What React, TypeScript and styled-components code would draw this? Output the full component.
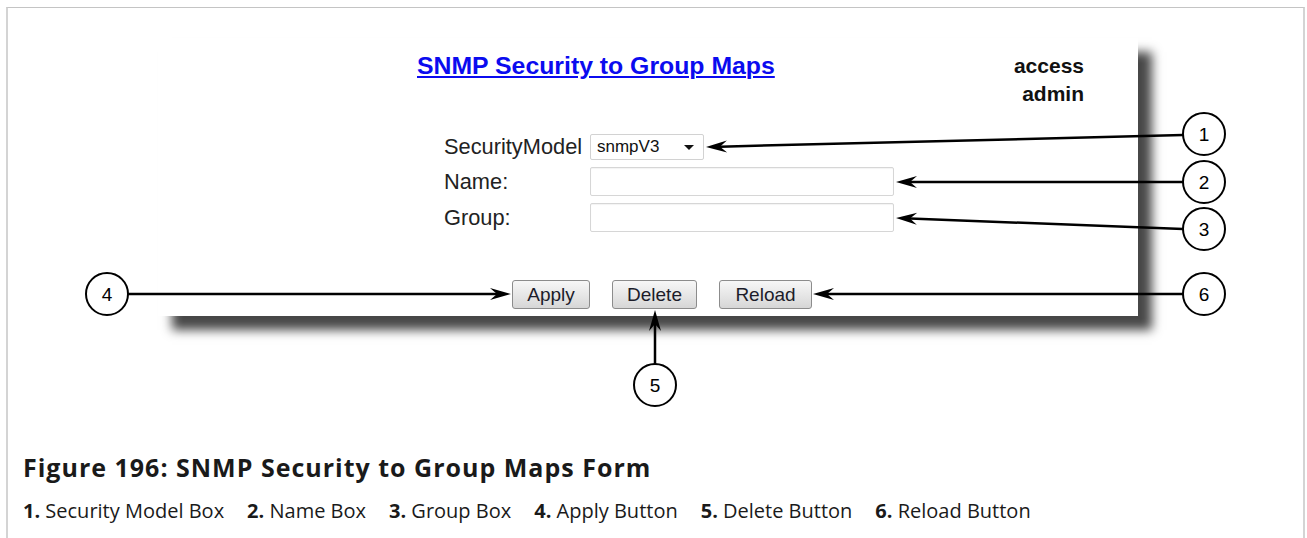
import React from 'react'
import styled, { createGlobalStyle } from 'styled-components'

const GlobalStyle = createGlobalStyle`
  html, body {
    margin: 0;
    padding: 0;
    background: #ffffff;
    overflow: hidden;
  }
  * { box-sizing: border-box; }
`

const Page = styled.div`
  position: relative;
  width: 1307px;
  height: 538px;
  padding-top: 7px;
`

const Frame = styled.div`
  margin: 0 2px 0 6px;
  height: 531px;
  border-top: 1px solid #c4c4c4;
  border-left: 2px solid #d4d4d4;
  border-right: 2px solid #d4d4d4;
`

const Figure = styled.div`
  height: 432px;
  padding: 30px 0 0 150px;
`

const Panel = styled.div`
  width: 980px;
  height: 278px;
  background: #ffffff;
  box-shadow: 14px 14px 10px rgba(0, 0, 0, 0.72);
  font-family: "Liberation Sans", Arial, sans-serif;
`

const Header = styled.div`
  display: flex;
  justify-content: space-between;
  align-items: flex-start;
  padding: 14px 54px 0 259px;
`

const Title = styled.a`
  font-size: 24.8px;
  line-height: 28px;
  font-weight: bold;
  color: #0b0bef;
  text-decoration: underline;
  text-decoration-thickness: 2px;
  text-underline-offset: 2px;
`

const UserBox = styled.div`
  text-align: right;
  font-size: 21px;
  line-height: 28px;
  font-weight: bold;
  color: #111111;
`

const Form = styled.div`
  display: grid;
  grid-template-columns: 146px auto;
  row-gap: 7px;
  align-items: center;
  margin: 26px 0 0 286px;
`

const Label = styled.div`
  font-size: 21.8px;
  color: #222222;
`

const SelectBox = styled.div`
  position: relative;
  width: 114px;
  height: 26px;
  border: 1px solid #d2d2d2;
  border-radius: 2px;
  padding-left: 6px;
  font-size: 17px;
  line-height: 24px;
  color: #111111;

  &::after {
    content: '';
    position: absolute;
    right: 9px;
    top: 10px;
    border-left: 5px solid transparent;
    border-right: 5px solid transparent;
    border-top: 5px solid #111111;
  }
`

const TextBox = styled.div`
  width: 304px;
  height: 29px;
  border: 1px solid #d6d6d6;
  border-radius: 2px;
  box-shadow: inset 0 1px 1px rgba(0, 0, 0, 0.05);
`

const Buttons = styled.div`
  display: flex;
  gap: 22px;
  margin: 48px 0 0 354px;
`

const Button = styled.button<{ $w: number }>`
  width: ${p => p.$w}px;
  height: 29px;
  padding: 0;
  font-family: "Liberation Sans", Arial, sans-serif;
  font-size: 19px;
  color: #1c1c2a;
  border: 1px solid #8c8c8c;
  border-radius: 3px;
  background: linear-gradient(#f7f7f7, #e4e4e4 60%, #d6d6d6);
`

const Caption = styled.div`
  padding: 11px 0 0 15px;
  font-family: "Open Sans", "Noto Sans", sans-serif;
  color: #1a1a1a;
`

const CaptionTitle = styled.div`
  font-size: 25px;
  line-height: 32px;
  font-weight: 700;
  letter-spacing: 1px;
`

const Legend = styled.div`
  display: flex;
  gap: 23px;
  margin-top: 14px;
  font-size: 20px;
  line-height: 28px;
`

const LegendItem = styled.span`
  b { font-weight: 700; }
`

const Callouts = styled.svg`
  position: absolute;
  top: 0;
  left: 0;
  pointer-events: none;
`

type Pt = [number, number]

const arrow = (from: Pt, tip: Pt) => {
  const dx = tip[0] - from[0]
  const dy = tip[1] - from[1]
  const len = Math.hypot(dx, dy)
  const ux = dx / len
  const uy = dy / len
  const nx = -uy
  const ny = ux
  const back = (d: number, s: number) =>
    `${tip[0] - ux * d + nx * s},${tip[1] - uy * d + ny * s}`
  return {
    end: [tip[0] - ux * 14, tip[1] - uy * 14] as Pt,
    head: `${tip[0]},${tip[1]} ${back(21, 6)} ${back(14, 0)} ${back(21, -6)}`,
  }
}

const callouts: { n: number; c: Pt; from: Pt; tip: Pt }[] = [
  { n: 1, c: [1204, 134], from: [1183, 135], tip: [706, 147] },
  { n: 2, c: [1204, 182], from: [1183, 182], tip: [896, 182] },
  { n: 3, c: [1204, 229], from: [1183, 229], tip: [896, 218] },
  { n: 4, c: [107, 294], from: [128, 294], tip: [511, 294] },
  { n: 5, c: [655, 385], from: [655, 364], tip: [655, 310] },
  { n: 6, c: [1204, 294], from: [1183, 294], tip: [813, 294] },
]

const legend = [
  'Security Model Box',
  'Name Box',
  'Group Box',
  'Apply Button',
  'Delete Button',
  'Reload Button',
]

const App = () => {
  return (
    <Page>
      <GlobalStyle />
      <Frame>
        <Figure>
          <Panel>
            <Header>
              <Title>SNMP Security to Group Maps</Title>
              <UserBox>
                access
                <br />
                admin
              </UserBox>
            </Header>
            <Form>
              <Label>SecurityModel</Label>
              <SelectBox>snmpV3</SelectBox>
              <Label>Name:</Label>
              <TextBox />
              <Label>Group:</Label>
              <TextBox />
            </Form>
            <Buttons>
              <Button $w={78}>Apply</Button>
              <Button $w={85}>Delete</Button>
              <Button $w={93}>Reload</Button>
            </Buttons>
          </Panel>
        </Figure>
        <Caption>
          <CaptionTitle>Figure 196: SNMP Security to Group Maps Form</CaptionTitle>
          <Legend>
            {legend.map((t, i) => (
              <LegendItem key={t}>
                <b>{i + 1}.</b> {t}
              </LegendItem>
            ))}
          </Legend>
        </Caption>
      </Frame>
      <Callouts width={1307} height={538}>
        {callouts.map(c => {
          const a = arrow(c.from, c.tip)
          return (
            <g key={c.n}>
              <line
                x1={c.from[0]}
                y1={c.from[1]}
                x2={a.end[0]}
                y2={a.end[1]}
                stroke="#000"
                strokeWidth={2.5}
              />
              <polygon points={a.head} fill="#000" />
              <circle cx={c.c[0]} cy={c.c[1]} r={21} fill="#fff" stroke="#000" strokeWidth={2} />
              <text
                x={c.c[0]}
                y={c.c[1] + 7}
                textAnchor="middle"
                fontFamily="'Liberation Sans', Arial, sans-serif"
                fontSize={19}
                fill="#000"
              >
                {c.n}
              </text>
            </g>
          )
        })}
      </Callouts>
    </Page>
  )
}

export default App
